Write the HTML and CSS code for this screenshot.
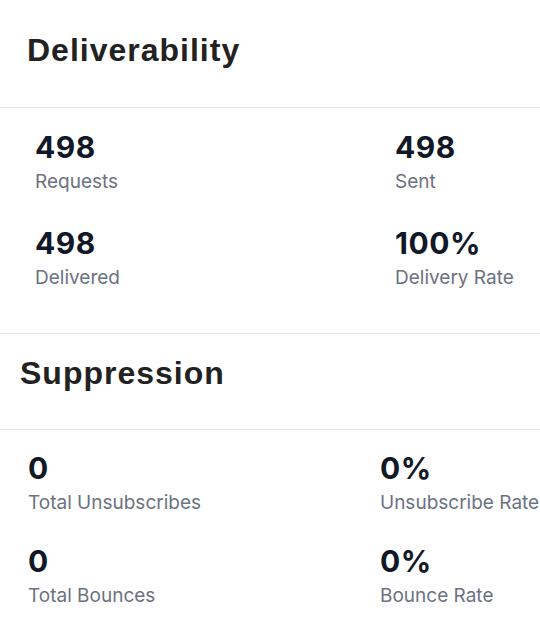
FILE: index.html
```html
<!DOCTYPE html>
<html>
<head>
<meta charset="utf-8">
<link rel="stylesheet" href="styles.css">
</head>
<body>
<section class="panel panel-deliver">
  <header class="panel-head"><h2 class="panel-title">Deliverability</h2></header>
  <div class="stats">
    <div class="stat"><div class="stat-value">498</div><div class="stat-label">Requests</div></div>
    <div class="stat"><div class="stat-value">498</div><div class="stat-label">Sent</div></div>
    <div class="stat"><div class="stat-value">498</div><div class="stat-label">Delivered</div></div>
    <div class="stat"><div class="stat-value">100%</div><div class="stat-label">Delivery Rate</div></div>
  </div>
</section>
<section class="panel panel-suppress">
  <header class="panel-head"><h2 class="panel-title">Suppression</h2></header>
  <div class="stats">
    <div class="stat"><div class="stat-value">0</div><div class="stat-label">Total Unsubscribes</div></div>
    <div class="stat"><div class="stat-value">0%</div><div class="stat-label">Unsubscribe Rate</div></div>
    <div class="stat"><div class="stat-value">0</div><div class="stat-label">Total Bounces</div></div>
    <div class="stat"><div class="stat-value">0%</div><div class="stat-label">Bounce Rate</div></div>
  </div>
</section>
</body>
</html>
```
FILE: styles.css
```css
html, body {
  margin: 0;
  padding: 0;
  background: #ffffff;
}
body {
  width: 540px;
  overflow: hidden;
  font-family: Inter, "Liberation Sans", sans-serif;
}
.panel-head {
  border-bottom: 1px solid #e5e7eb;
}
.panel-title {
  margin: 0;
  font-family: "Liberation Sans", Arial, sans-serif;
  font-weight: 700;
  font-size: 32px;
  line-height: 36px;
  letter-spacing: 1px;
  color: #222222;
}
.panel-deliver .panel-head {
  padding: 32px 0 39px 27px;
}
.panel-suppress .panel-head {
  padding: 21px 0 38px 20px;
}
.stats {
  display: grid;
}
.panel-deliver .stats {
  grid-template-columns: 360px 1fr;
  padding: 21px 0 41px 35px;
  row-gap: 29px;
  border-bottom: 1px solid #e5e7eb;
}
.panel-suppress .stats {
  grid-template-columns: 352px 1fr;
  padding: 20px 0 20px 28px;
  row-gap: 26px;
}
.stat-value {
  font-weight: 700;
  font-size: 30px;
  line-height: 36px;
  letter-spacing: 0.5px;
  color: #111827;
}
.stat-label {
  margin-top: 3px;
  font-size: 19px;
  line-height: 28px;
  color: #6b7280;
}
```
